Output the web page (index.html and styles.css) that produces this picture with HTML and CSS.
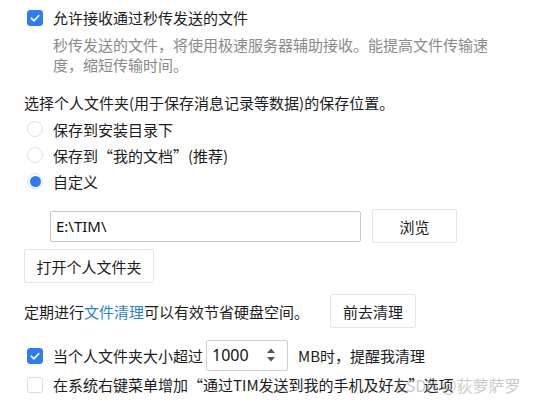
FILE: index.html
```html
<!DOCTYPE html>
<html lang="zh">
<head>
<meta charset="utf-8">
<link rel="stylesheet" href="styles.css">
</head>
<body>
<div class="page">
  <div class="row first">
    <span class="check on"><svg viewBox="0 0 16 16" width="16" height="16"><path d="M4.2 8.2 L7 10.8 L11.8 5.6" fill="none" stroke="#fff" stroke-width="1.6" stroke-linecap="round" stroke-linejoin="round"/></svg></span>
    <span class="label">允许接收通过秒传发送的文件</span>
  </div>
  <div class="desc">秒传发送的文件，将使用极速服务器辅助接收。能提高文件传输速<br>度，缩短传输时间。</div>
  <div class="heading">选择个人文件夹(用于保存消息记录等数据)的保存位置。</div>
  <div class="radios">
    <div class="radio-row"><span class="radio"></span><span class="label">保存到安装目录下</span></div>
    <div class="radio-row"><span class="radio"></span><span class="label">保存到“我的文档”(推荐)</span></div>
    <div class="radio-row"><span class="radio on"></span><span class="label">自定义</span></div>
  </div>
  <div class="path-row">
    <div class="input">E:\TIM\</div>
    <div class="btn browse">浏览</div>
  </div>
  <div class="btn open">打开个人文件夹</div>
  <div class="clean-row">
    <span>定期进行<span class="link">文件清理</span>可以有效节省硬盘空间。</span>
    <div class="btn go">前去清理</div>
  </div>
  <div class="row size-row">
    <span class="check on"><svg viewBox="0 0 16 16" width="16" height="16"><path d="M4.2 8.2 L7 10.8 L11.8 5.6" fill="none" stroke="#fff" stroke-width="1.6" stroke-linecap="round" stroke-linejoin="round"/></svg></span>
    <span class="label">当个人文件夹大小超过</span>
    <div class="spin">
      <span class="num">1000</span>
      <svg class="arrows" viewBox="0 0 10 18" width="10" height="18"><path d="M1 7 L5 2.5 L9 7 Z M1 11 L5 15.5 L9 11 Z" fill="#555"/></svg>
    </div>
    <span class="mb">MB时，提醒我清理</span>
  </div>
  <div class="row last">
    <span class="check"></span>
    <span class="label">在系统右键菜单增加“通过TIM发送到我的手机及好友”选项</span>
    <span class="watermark">CSDN @荻萝萨罗</span>
  </div>
</div>
</body>
</html>
```
FILE: styles.css
```css
* { box-sizing: border-box; }
html, body { margin: 0; padding: 0; background: #fff; }
body {
  font-family: "Noto Sans CJK SC", "Noto Sans", sans-serif;
  font-size: 15px;
  color: #1c1c1c;
  width: 548px;
  height: 404px;
  overflow: hidden;
}
.page {
  padding: 8px 0 0 24px;
  display: flex;
  flex-direction: column;
  align-items: flex-start;
}
.row {
  display: flex;
  align-items: center;
  height: 20px;
  line-height: 20px;
  position: relative;
}
.check {
  width: 16px;
  height: 16px;
  margin-left: 3px;
  margin-right: 10px;
  border: 1px solid #dcdcdc;
  border-radius: 3px;
  background: #fff;
  display: flex;
  flex: none;
}
.check.on {
  background: #2f7bf5;
  border-color: #2f7bf5;
}
.check.on svg { margin: -1px; }
.desc {
  margin-top: 7px;
  padding-left: 29px;
  line-height: 20px;
  color: #8a8a8a;
}
.heading {
  margin-top: 18px;
  line-height: 20px;
}
.radios { margin-top: 3px; display: flex; flex-direction: column; }
.radio-row {
  height: 26px;
  display: flex;
  align-items: center;
}
.radio {
  width: 16px;
  height: 16px;
  margin-left: 3px;
  margin-right: 10px;
  border: 1px solid #e2e2e2;
  border-radius: 50%;
  display: flex;
  align-items: center;
  justify-content: center;
}
.radio.on::after {
  content: "";
  width: 11px;
  height: 11px;
  border-radius: 50%;
  background: #2f7bf5;
}
.path-row {
  margin-top: 15px;
  margin-left: 26px;
  display: flex;
  align-items: center;
  gap: 11px;
}
.input {
  width: 311px;
  height: 31px;
  border: 1px solid #c8c8c8;
  border-radius: 2px;
  padding-left: 5px;
  line-height: 29px;
  font-family: "Noto Sans", "Noto Sans CJK SC", sans-serif;
  font-size: 15px;
  color: #111;
}
.btn {
  height: 34px;
  border: 1px solid #e6e6e6;
  border-radius: 2px;
  display: flex;
  align-items: center;
  justify-content: center;
  background: #fff;
}
.browse { width: 85px; }
.open { width: 130px; margin-top: 6px; }
.clean-row {
  margin-top: 11px;
  display: flex;
  align-items: center;
}
.link { color: #2d7fd2; }
.go { width: 86px; margin-left: 21px; }
.size-row {
  margin-top: 12px;
  height: 31px;
}
.spin {
  margin-left: 3px;
  width: 82px;
  height: 31px;
  border: 1px solid #cfcfcf;
  border-radius: 2px;
  display: flex;
  align-items: center;
  justify-content: space-between;
  padding: 0 11px 2px 5px;
}
.num {
  font-family: "Noto Sans", sans-serif;
  font-size: 16px;
  color: #111;
}
.mb { margin-left: 10px; }
.last { margin-top: 4px; }
.watermark {
  position: absolute;
  left: 372px;
  top: 0;
  line-height: 20px;
  color: rgba(150, 150, 150, 0.5);
  font-size: 16px;
  white-space: nowrap;
}
```
